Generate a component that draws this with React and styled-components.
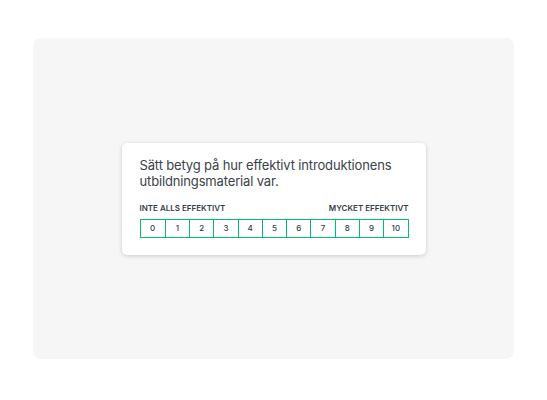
import React from 'react'
import styled, { createGlobalStyle } from 'styled-components'

const Global = createGlobalStyle`
  body {
    margin: 0;
    background: #ffffff;
    font-family: "Inter", "Liberation Sans", sans-serif;
  }
`

const Page = styled.div`
  width: 547px;
  height: 400px;
  padding: 38px 33px 41px 33px;
  box-sizing: border-box;
`

const Panel = styled.div`
  width: 100%;
  height: 100%;
  background: #f6f6f6;
  border-radius: 8px;
  display: flex;
  align-items: center;
  justify-content: center;
`

const Card = styled.div`
  width: 304px;
  box-sizing: border-box;
  background: #ffffff;
  border-radius: 5px;
  padding: 14px 17px 17px 18px;
  box-shadow: 0 1px 4px rgba(0, 0, 0, 0.18);
`

const Question = styled.div`
  font-size: 13px;
  line-height: 16px;
  color: #3b4249;
  letter-spacing: -0.15px;
`

const Labels = styled.div`
  display: flex;
  justify-content: space-between;
  margin-top: 15px;
  font-size: 8px;
  font-weight: 600;
  color: #333e48;
  line-height: 9px;
`

const Scale = styled.div`
  display: grid;
  grid-template-columns: repeat(11, 1fr);
  margin-top: 6px;
  height: 19px;
  border: 1px solid #00bf6f;
  box-sizing: border-box;
`

const Cell = styled.div`
  display: flex;
  align-items: center;
  justify-content: center;
  font-size: 8px;
  font-weight: 500;
  color: #333e48;
  border-left: ${p => (p.$first ? 'none' : '1px solid #00bf6f')};
`

export default function App() {
  const nums = Array.from({ length: 11 }, (_, i) => i)
  return (
    <Page>
      <Global />
      <Panel>
        <Card>
          <Question>
            Sätt betyg på hur effektivt introduktionens utbildningsmaterial var.
          </Question>
          <Labels>
            <span>INTE ALLS EFFEKTIVT</span>
            <span>MYCKET EFFEKTIVT</span>
          </Labels>
          <Scale>
            {nums.map(n => (
              <Cell key={n} $first={n === 0}>{n}</Cell>
            ))}
          </Scale>
        </Card>
      </Panel>
    </Page>
  )
}
